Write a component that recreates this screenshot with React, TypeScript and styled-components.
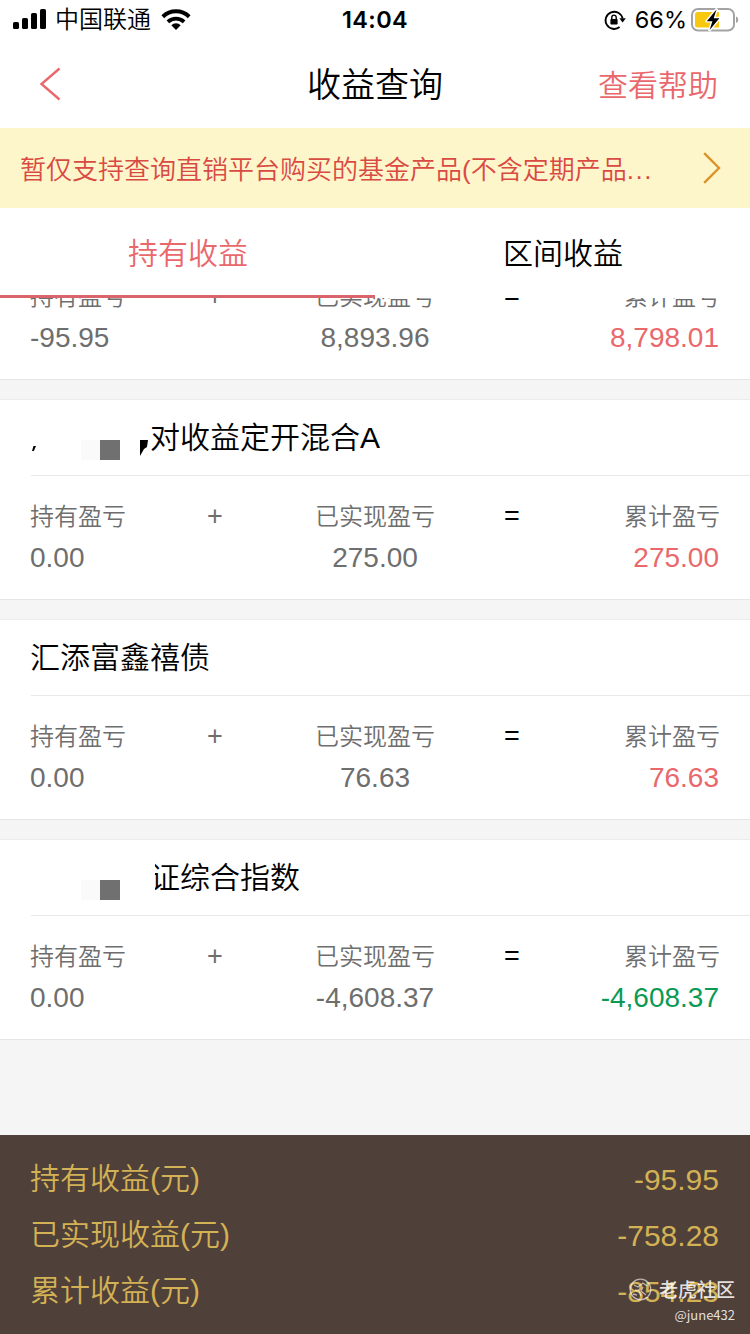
import React from 'react';
import styled, { createGlobalStyle } from 'styled-components';

const GlobalStyle = createGlobalStyle`
  * { box-sizing: border-box; }
  body {
    margin: 0;
    background: #fff;
    font-family: "Liberation Sans", "Noto Sans CJK SC", sans-serif;
    font-weight: 350;
    color: #000;
  }
`;

const Screen = styled.div`
  width: 750px;
  height: 1334px;
  display: flex;
  flex-direction: column;
  overflow: hidden;
  background: #fff;
`;

const StatusBar = styled.header`
  height: 40px;
  flex: none;
  display: grid;
  grid-template-columns: 1fr auto 1fr;
  align-items: center;
  padding: 0 11px 0 13px;
  line-height: 40px;
`;

const StatusGroup = styled.div<{ $end?: boolean }>`
  display: flex;
  align-items: center;
  justify-content: ${(p) => (p.$end ? 'flex-end' : 'flex-start')};
  height: 40px;
`;

const Carrier = styled.span`
  font-size: 24px;
  margin: 0 10px 0 9px;
`;

const Clock = styled.time`
  font-family: Inter, sans-serif;
  font-size: 23.5px;
  font-weight: 600;
  letter-spacing: 0.4px;
  margin-left: -2px;
`;

const Percent = styled.span`
  font-family: Inter, sans-serif;
  font-size: 23.5px;
  font-weight: 400;
  margin: 0 4px 0 9px;
`;

const NavBar = styled.nav`
  height: 88px;
  flex: none;
  display: grid;
  grid-template-columns: 1fr 136px 1fr;
  align-items: center;
  padding: 0 32px 0 38px;
`;

const PageTitle = styled.h1`
  margin: 0 0 0 -3px;
  padding-top: 2px;
  font-size: 34px;
  font-weight: 350;
  line-height: 86px;
  white-space: nowrap;
`;

const HelpLink = styled.span`
  justify-self: end;
  font-size: 30px;
  line-height: 84px;
  padding-top: 3px;
  color: #e9686c;
`;

const Notice = styled.div`
  height: 80px;
  flex: none;
  display: flex;
  align-items: center;
  justify-content: space-between;
  padding: 0 29px 0 20px;
  background: #fef6cb;
  color: #d94a43;
  font-size: 26px;
  line-height: 76px;
  white-space: nowrap;
`;

const NoticeText = styled.span`
  padding-top: 3px;
`;

const Ellipsis = styled.span`
  letter-spacing: 1.6px;
`;

const Tabs = styled.div`
  height: 90px;
  flex: none;
  display: flex;
`;

const Tab = styled.div<{ $active?: boolean }>`
  flex: 1;
  padding-left: 1px;
  text-align: center;
  font-size: 30px;
  line-height: 91px;
  color: ${(p) => (p.$active ? '#e9686c' : '#000')};
  border-bottom: 3px solid ${(p) => (p.$active ? '#d9646a' : 'transparent')};
`;

const List = styled.main`
  flex: 1;
  min-height: 0;
  overflow: hidden;
  display: flex;
  flex-direction: column;
  gap: 19px;
  background: #f5f5f5;
`;

const Card = styled.section<{ $scrolled?: boolean }>`
  flex: none;
  height: 201px;
  margin-top: ${(p) => (p.$scrolled ? '-119px' : '0')};
  background: #fff;
  border-top: 1px solid #ececec;
  border-bottom: 1px solid #e6e6e6;
`;

const CardTitle = styled.h2`
  position: relative;
  height: 76px;
  margin: 0 0 0 31px;
  border-bottom: 1px solid #e8e8e8;
  font-size: 30px;
  font-weight: 350;
  line-height: 75px;
`;

const TitleText = styled.span<{ $masked?: boolean }>`
  display: block;
  margin-left: -1px;
  padding-left: ${(p) => (p.$masked ? '120px' : '0')};
`;

const Mosaic = styled.svg`
  position: absolute;
  left: -1px;
  top: 30px;
`;

const TitleMask = styled.i`
  position: absolute;
  left: 115px;
  top: 16px;
  width: 9px;
  height: 44px;
  background: #fff;
`;

const Formula = styled.div`
  display: grid;
  grid-template-columns: 150px 70px 250px 24px 1fr;
  grid-template-rows: 41px 41px;
  padding: 20px 31px 0 30px;
  line-height: 41px;
  color: #6e6e6e;
`;

const Label = styled.span<{ $align?: string }>`
  font-size: 24px;
  text-align: ${(p) => p.$align || 'left'};
  margin-right: ${(p) => (p.$align === 'right' ? '-1px' : '0')};
  white-space: nowrap;
`;

const Sign = styled.span<{ $dark?: boolean }>`
  font-size: 27px;
  line-height: 41px;
  text-align: center;
  color: ${(p) => (p.$dark ? '#000' : '#6e6e6e')};
`;

const Value = styled.span<{ $column: number; $align?: string; $color?: string }>`
  grid-row: 2;
  grid-column: ${(p) => p.$column};
  font-size: 28px;
  text-align: ${(p) => p.$align || 'left'};
  color: ${(p) => p.$color || '#6e6e6e'};
`;

const Summary = styled.footer`
  position: relative;
  height: 199px;
  flex: none;
  padding: 16px 31px 0 30px;
  background: #4f4039;
`;

const SummaryRow = styled.div`
  display: flex;
  justify-content: space-between;
  height: 56px;
  line-height: 56px;
  font-size: 30px;
  color: #d3b155;
`;

const SummaryValue = styled.span`
  padding-top: 1px;
`;

const Watermark = styled.div`
  position: absolute;
  right: 15px;
  top: 141px;
  display: flex;
  flex-direction: column;
  align-items: flex-end;
  color: rgba(255, 255, 255, 0.85);
  font-family: "Noto Sans CJK SC", sans-serif;
`;

const Brand = styled.div`
  display: flex;
  align-items: center;
  gap: 7px;
  height: 26px;
  line-height: 24px;
  font-size: 19px;
  font-weight: 500;
`;

const Author = styled.div`
  font-size: 13px;
  font-weight: 400;
  line-height: 26px;
`;

const RED = '#e9686c';
const GREEN = '#0b9a55';

type Fund = {
  name: string;
  mask?: 'partial' | 'full';
  held: string;
  realized: string;
  total: string;
  color: string;
};

const funds: Fund[] = [
  { name: '', held: '-95.95', realized: '8,893.96', total: '8,798.01', color: RED },
  { name: '对收益定开混合A', mask: 'partial', held: '0.00', realized: '275.00', total: '275.00', color: RED },
  { name: '汇添富鑫禧债', held: '0.00', realized: '76.63', total: '76.63', color: RED },
  { name: '证综合指数', mask: 'full', held: '0.00', realized: '-4,608.37', total: '-4,608.37', color: GREEN },
];

const totals = [
  ['持有收益(元)', '-95.95'],
  ['已实现收益(元)', '-758.28'],
  ['累计收益(元)', '-854.23'],
];

const SignalIcon = () => (
  <svg width="33" height="22" viewBox="0 0 33 22">
    <rect x="0" y="13" width="6" height="7" rx="1.6" />
    <rect x="9" y="9" width="6" height="11" rx="1.6" />
    <rect x="18" y="4" width="6" height="16" rx="1.6" />
    <rect x="27" y="0" width="6" height="20" rx="1.6" />
  </svg>
);

const WifiIcon = () => (
  <svg width="30" height="22" viewBox="0 0 30 22">
    <path d="M1.8 7.700a19 19 0 0 1 26.400 0" fill="none" stroke="#000" strokeWidth="4" />
    <path d="M6.900 12.800a11.800 11.800 0 0 1 16.200 0" fill="none" stroke="#000" strokeWidth="3.800" />
    <path d="M15 21l-4.700-4.800a6.800 6.800 0 0 1 9.400 0z" />
  </svg>
);

const RotationLockIcon = () => (
  <svg width="22" height="22" viewBox="0 0 22 22">
    <path d="M15.6 18A8.6 8.6 0 1 1 18.6 9.5" fill="none" stroke="#000" strokeWidth="1.9" />
    <path d="M15.4 9.2h6.4l-3.2 4.3z" />
    <rect x="6.4" y="10" width="7.2" height="5.6" rx="0.8" />
    <path d="M7.8 10.4V8.3a2.2 2.2 0 0 1 4.4 0v2.1" fill="none" stroke="#000" strokeWidth="1.4" />
  </svg>
);

const BatteryIcon = () => (
  <svg width="48" height="24" viewBox="0 0 48 24">
    <rect x="1" y="1" width="42" height="21.5" rx="6" fill="#fff" stroke="#a3a3a3" strokeWidth="2" />
    <path d="M6.5 4H28v15.5H6.5A2.5 2.5 0 0 1 4 17V6.5A2.5 2.5 0 0 1 6.5 4z" fill="#f8c80f" />
    <path d="M45 8.5c3 1 3 5.5 0 6.5z" fill="#a3a3a3" />
    <path d="M25.5 1.5L15.8 13.2h5.6L18.6 22l9.8-11.8h-5.7z" fill="#000" stroke="#fff" strokeWidth="2.8" paintOrder="stroke" strokeLinejoin="round" />
  </svg>
);

const BackIcon = () => (
  <svg width="24" height="36" viewBox="0 0 24 36" fill="none" stroke={RED} strokeWidth="2.4">
    <path d="M21.5 2.5L3.5 18l18 15.5" />
  </svg>
);

const MoreIcon = () => (
  <svg width="18" height="32" viewBox="0 0 18 32" fill="none" stroke="#dd922a" strokeWidth="2.4">
    <path d="M1.2 1.2L16 16 1.2 30.8" />
  </svg>
);

const NameMosaic = ({ kind }: { kind: 'partial' | 'full' }) => (
  <>
    <Mosaic width="128" height="34" viewBox="0 0 128 34">
      <rect x="51" y="10" width="19" height="20" fill="#fafafa" />
      <rect x="70" y="10" width="20" height="20" fill="#707070" />
      {kind === 'partial' && (
        <>
          <path d="M3.5 16H6l-2.2 5H2z" />
          <path d="M110 10h8l-1 7-3 2-4 7z" />
        </>
      )}
    </Mosaic>
    {kind === 'full' && <TitleMask />}
  </>
);

const FundCard = ({ fund, scrolled }: { fund: Fund; scrolled: boolean }) => (
  <Card $scrolled={scrolled}>
    <CardTitle>
      <TitleText $masked={!!fund.mask}>{fund.name}</TitleText>
      {fund.mask && <NameMosaic kind={fund.mask} />}
    </CardTitle>
    <Formula>
      <Label>持有盈亏</Label>
      <Sign>+</Sign>
      <Label $align="center">已实现盈亏</Label>
      <Sign $dark>=</Sign>
      <Label $align="right">累计盈亏</Label>
      <Value $column={1}>{fund.held}</Value>
      <Value $column={3} $align="center">{fund.realized}</Value>
      <Value $column={5} $align="right" $color={fund.color}>{fund.total}</Value>
    </Formula>
  </Card>
);

export default function App() {
  return (
    <Screen>
      <GlobalStyle />
      <StatusBar>
        <StatusGroup>
          <SignalIcon />
          <Carrier>中国联通</Carrier>
          <WifiIcon />
        </StatusGroup>
        <Clock>14:04</Clock>
        <StatusGroup $end>
          <RotationLockIcon />
          <Percent>66%</Percent>
          <BatteryIcon />
        </StatusGroup>
      </StatusBar>
      <NavBar>
        <BackIcon />
        <PageTitle>收益查询</PageTitle>
        <HelpLink>查看帮助</HelpLink>
      </NavBar>
      <Notice>
        <NoticeText>
          暂仅支持查询直销平台购买的基金产品(不含定期产品<Ellipsis>...</Ellipsis>
        </NoticeText>
        <MoreIcon />
      </Notice>
      <Tabs>
        <Tab $active>持有收益</Tab>
        <Tab>区间收益</Tab>
      </Tabs>
      <List>
        {funds.map((fund, i) => (
          <FundCard key={i} fund={fund} scrolled={i === 0} />
        ))}
      </List>
      <Summary>
        {totals.map(([label, value]) => (
          <SummaryRow key={label}>
            <span>{label}</span>
            <SummaryValue>{value}</SummaryValue>
          </SummaryRow>
        ))}
        <Watermark>
          <Brand>
            <svg width="23" height="23" viewBox="0 0 23 23" fill="none" stroke="#fff" strokeOpacity="0.6" strokeWidth="1.3">
              <circle cx="11.5" cy="11.5" r="10.3" />
              <path d="M5 7l4 2 5-4 4 3M6 12l4 1 2 5M14 9l-2 4 5 4M4 16l4 1" />
            </svg>
            <span>老虎社区</span>
          </Brand>
          <Author>@june432</Author>
        </Watermark>
      </Summary>
    </Screen>
  );
}
